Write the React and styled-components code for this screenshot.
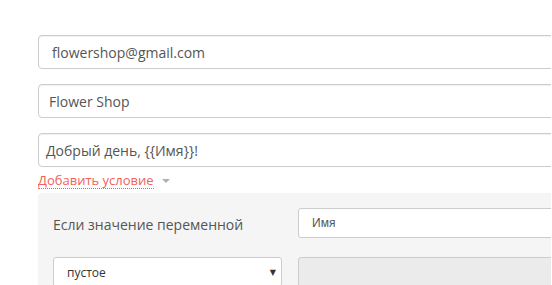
import React from "react";
import styled, { createGlobalStyle } from "styled-components";

const GlobalStyle = createGlobalStyle`
  html, body {
    margin: 0;
    padding: 0;
    background: #fff;
    font-family: "Open Sans", "Liberation Sans", sans-serif;
  }
`;

const Page = styled.div`
  width: 552px;
  height: 285px;
  overflow: hidden;
  padding: 35px 0 0 38px;
  box-sizing: border-box;
`;

const Column = styled.div`
  width: 513px;
  overflow: hidden;
  display: flex;
  flex-direction: column;
`;

const TextField = styled.div`
  box-sizing: border-box;
  width: 540px;
  height: 34px;
  border: 1px solid #ccc;
  border-radius: 4px;
  box-shadow: inset 0 1px 1px rgba(0, 0, 0, 0.06);
  display: flex;
  align-items: center;
  padding-left: ${(p) => p.indent || 8}px;
  font-size: 14px;
  color: #555;
  margin-bottom: ${(p) => (p.last ? 0 : 15)}px;
  white-space: nowrap;
`;

const ConditionToggle = styled.div`
  display: flex;
  align-items: center;
  gap: 8px;
  height: 26px;
`;

const DottedLink = styled.span`
  color: #f0625a;
  font-size: 13px;
  line-height: 16px;
  border-bottom: 1px dotted #f0625a;
`;

const Caret = styled.span`
  width: 0;
  height: 0;
  border-left: 4px solid transparent;
  border-right: 4px solid transparent;
  border-top: 4px solid #a4b4bf;
  margin-top: 1px;
`;

const Panel = styled.div`
  background: #f5f5f5;
  border-radius: 4px 0 0 0;
  padding: 15px 0 20px 15px;
  display: grid;
  grid-template-columns: 229px 1fr;
  column-gap: 16px;
  row-gap: 18px;
`;

const Label = styled.div`
  font-size: 14px;
  color: #555;
  display: flex;
  align-items: center;
  height: 30px;
  padding-top: 1px;
`;

const SmallInput = styled.div`
  box-sizing: border-box;
  height: 30px;
  border: 1px solid #ccc;
  border-radius: 3px;
  background: ${(p) => (p.disabled ? "#ebebeb" : "#fff")};
  display: flex;
  align-items: center;
  padding-left: 13px;
  font-family: "Liberation Sans", Arial, sans-serif;
  font-size: 12px;
  color: #555;
  margin-right: -4px;
`;

const Select = styled.div`
  box-sizing: border-box;
  height: 30px;
  border: 1px solid #ccc;
  border-radius: 3px;
  background: #fff;
  display: flex;
  align-items: center;
  justify-content: space-between;
  padding: 0 5px 0 13px;
  font-size: 12px;
  color: #333;
`;

const SelectArrow = styled.span`
  font-size: 8px;
  color: #333;
  font-family: "DejaVu Sans", sans-serif;
`;

export default function App() {
  return (
    <>
      <GlobalStyle />
      <Page>
        <Column>
          <TextField indent={13}>flowershop@gmail.com</TextField>
          <TextField indent={10}>Flower Shop</TextField>
          <TextField indent={7} last>
            Добрый день, {"{{Имя}}"}!
          </TextField>
          <ConditionToggle>
            <DottedLink>Добавить условие</DottedLink>
            <Caret />
          </ConditionToggle>
          <Panel>
            <Label>Если значение переменной</Label>
            <SmallInput>Имя</SmallInput>
            <Select>
              <span>пустое</span>
              <SelectArrow>▼</SelectArrow>
            </Select>
            <SmallInput disabled />
          </Panel>
        </Column>
      </Page>
    </>
  );
}
